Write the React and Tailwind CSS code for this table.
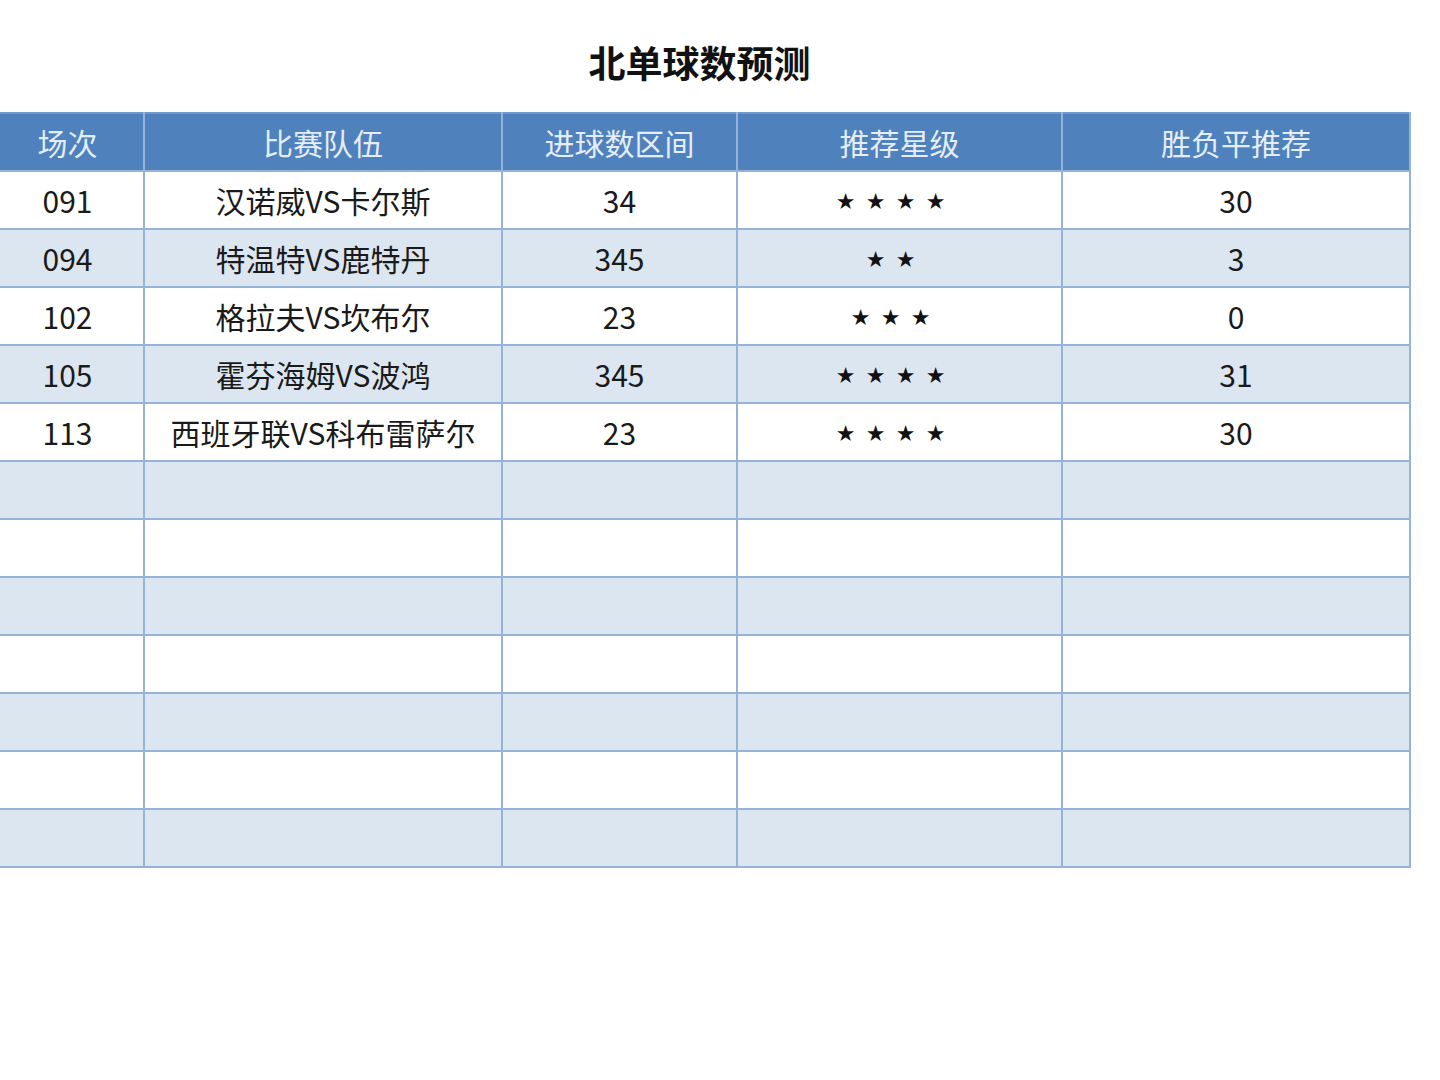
const rows = [
  { no: "091", match: "汉诺威VS卡尔斯", goals: "34", stars: 4, pick: "30" },
  { no: "094", match: "特温特VS鹿特丹", goals: "345", stars: 2, pick: "3" },
  { no: "102", match: "格拉夫VS坎布尔", goals: "23", stars: 3, pick: "0" },
  { no: "105", match: "霍芬海姆VS波鸿", goals: "345", stars: 4, pick: "31" },
  { no: "113", match: "西班牙联VS科布雷萨尔", goals: "23", stars: 4, pick: "30" },
];

const empty = Array.from({ length: 7 }, () => null);

const cell = "border-2 border-[#95b3d7] text-center align-middle p-0";

function Stars({ n }) {
  return (
    <div className="flex items-center justify-center pr-[18px] pt-[4px]">
      {Array.from({ length: n }, (_, i) => (
        <span
          key={i}
          className="w-[30px] text-center text-[22px] leading-none text-[#111]"
          style={{ fontFamily: '"DejaVu Sans", sans-serif' }}
        >
          ★
        </span>
      ))}
    </div>
  );
}

export default function App() {
  const all = [...rows, ...empty];
  return (
    <div
      className="min-h-[1080px] w-[1440px] bg-white pt-[38px]"
      style={{ fontFamily: '"Noto Sans CJK SC", "Noto Sans", sans-serif' }}
    >
      <div className="-ml-[10px] w-[1419px]">
        <h1 className="mb-[26px] h-[48px] text-center text-[37px] font-bold leading-[48px] text-[#111]">
          北单球数预测
        </h1>
        <table className="w-[1419px] table-fixed border-collapse text-[30px] text-[#1a1a1a]">
          <colgroup>
            <col className="w-[153px]" />
            <col className="w-[358px]" />
            <col className="w-[235px]" />
            <col className="w-[325px]" />
            <col className="w-[348px]" />
          </colgroup>
          <thead>
            <tr className="h-[58px] bg-[#4f81bd]">
              {["场次", "比赛队伍", "进球数区间", "推荐星级", "胜负平推荐"].map((h) => (
                <th
                  key={h}
                  className="border-2 border-[#95b3d7] border-t-[#6f98cc] p-0 text-center text-[30px] font-normal text-[#e4edf8]"
                >
                  {h}
                </th>
              ))}
            </tr>
          </thead>
          <tbody>
            {all.map((r, i) => (
              <tr key={i} className={i % 2 === 0 ? "h-[58px] bg-white" : "h-[58px] bg-[#dce6f1]"}>
                <td className={cell}>{r?.no}</td>
                <td className={cell}>{r?.match}</td>
                <td className={cell}>{r?.goals}</td>
                <td className={cell}>{r ? <Stars n={r.stars} /> : null}</td>
                <td className={cell}>{r?.pick}</td>
              </tr>
            ))}
          </tbody>
        </table>
      </div>
    </div>
  );
}
